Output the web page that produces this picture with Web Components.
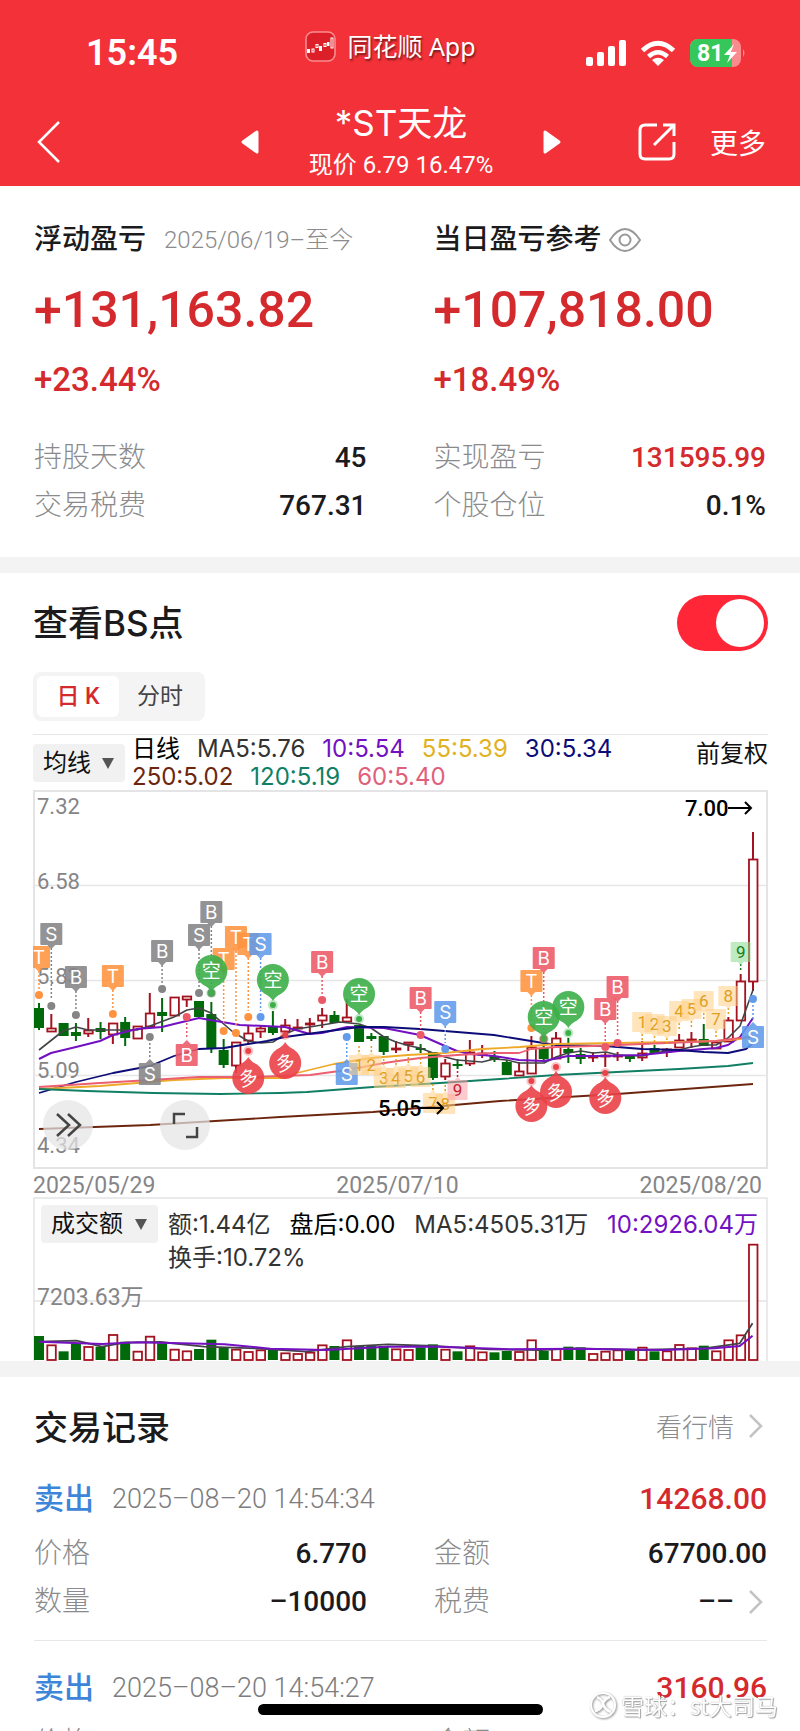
<!DOCTYPE html>
<html lang="zh-CN">
<head>
<meta charset="utf-8">
<meta name="viewport" content="width=device-width, initial-scale=1">
<title>*ST天龙</title>
<style>
body{margin:0;background:#fff;color:#1b1b1d;
 --num:Roboto,"Noto Sans CJK SC",sans-serif;
 --ui:Inter,"Noto Sans CJK SC",sans-serif;
 --red:#d42a2e;--muted:#8b8b8d;--line:#e7e7e9;
 font:400 28px/48px var(--num)}
</style>
</head>
<body>
<trade-page></trade-page>
<script>
const define=(name,html,init)=>{
  const t=document.createElement('template');t.innerHTML=html;
  customElements.define(name,class extends HTMLElement{
    constructor(){super();this.attachShadow({mode:'open'}).append(t.content.cloneNode(true));}
    connectedCallback(){if(init&&!this.ready){this.ready=true;init.call(this,this.shadowRoot);}}
  });
};

define('status-bar',`<style>
:host{display:grid;grid-template-columns:1fr auto 1fr;align-items:center;height:98px;padding:8px 53px 0 86px;color:#fff;box-sizing:border-box}
time{font:600 36px/40px var(--num)}
.app{display:flex;align-items:center;gap:11px;font:400 25px/36px "Noto Sans","Noto Sans CJK SC",sans-serif;text-shadow:1px 2px 2px #0008;padding:0 0 14px;margin-right:52px}
.sys{display:flex;justify-content:flex-end;align-items:center;gap:14px}
svg{display:block}
</style>
<time>15:45</time>
<div class="app"><svg width="31" height="31" viewBox="0 0 31 31"><rect x="1" y="1" width="29" height="29" rx="7" fill="#dc1f28" stroke="#f98d8f" stroke-width="1.6"/><g fill="#fff"><rect x="2" y="18" width="3" height="4"/><rect x="14" y="15" width="3" height="5"/><rect x="22" y="11" width="2.500" height="4"/></g><g fill="none" stroke="#fff" stroke-width="1"><rect x="7" y="18" width="2" height="3"/><rect x="11" y="13.500" width="2" height="3"/><rect x="19" y="12.500" width="2" height="3"/><rect x="26" y="7" width="2" height="10"/></g></svg><span>同花顺 App</span></div>
<div class="sys">
<svg width="40" height="27" viewBox="0 0 40 27" fill="#fff"><rect y="17" width="7" height="9" rx="2"/><rect x="11" y="12" width="7" height="14" rx="2"/><rect x="22" y="6" width="7" height="20" rx="2"/><rect x="33" width="7" height="26" rx="2"/></svg>
<svg width="36" height="27" viewBox="0 0 36 27"><g fill="none" stroke="#fff" stroke-width="5"><path d="M2.500 10.500Q18-4 33.500 10.500"/><path d="M8.500 16.500Q18 8 27.500 16.500" stroke-width="4.500"/></g><path d="M18 26l-6-6q6-4.500 12 0z" fill="#fff"/></svg>
<svg width="57" height="28" viewBox="0 0 57 28"><defs><clipPath id="b"><rect width="51" height="28" rx="8"/></clipPath></defs><g clip-path="url(#b)"><rect width="51" height="28" fill="#f98a8d"/><rect width="42" height="28" fill="#35c759"/></g><path d="M53 10q3 4 0 8z" fill="#f98a8d"/><text x="7" y="22" font-family="Roboto" font-weight="700" font-size="23" fill="#fff">81</text><path d="M44 5L34 16h6l-3 8 10-11h-6z" fill="#fff"/></svg>
</div>`);

define('stock-header',`<style>
:host{display:grid;grid-template-columns:1fr auto 1fr;align-items:center;height:88px;padding:0 34px 0 36px;color:#fff;box-sizing:border-box}
button{appearance:none;border:0;background:none;color:inherit;padding:0;font:400 28px/40px "Noto Sans CJK SC",sans-serif;display:block}
svg{display:block}
.mid{display:flex;align-items:center;gap:42px}
.name{width:200px;text-align:center}
h1{margin:4px 0 0;font:400 35px/42px Inter,"Noto Sans CJK SC",sans-serif}
p{margin:0;font:400 24px/42px var(--num);white-space:nowrap}
.right{display:flex;justify-content:flex-end;align-items:center;gap:34px}
</style>
<button aria-label="返回"><svg width="26" height="42" viewBox="0 0 26 42"><path d="M23 1L3 21l20 20" fill="none" stroke="#fff" stroke-width="2.500"/></svg></button>
<div class="mid"><button aria-label="上一只"><svg width="18" height="24" viewBox="0 0 18 24"><path d="M16 2v20L2 12z" fill="#fff" stroke="#fff" stroke-width="3" stroke-linejoin="round"/></svg></button>
<div class="name"><h1>*ST天龙</h1><p>现价 6.79 16.47%</p></div>
<button aria-label="下一只"><svg width="18" height="24" viewBox="0 0 18 24"><path d="M2 2v20l14-10z" fill="#fff" stroke="#fff" stroke-width="3" stroke-linejoin="round"/></svg></button></div>
<div class="right"><button aria-label="分享"><svg width="38" height="38" viewBox="0 0 38 38" fill="none" stroke="#fff" stroke-width="3"><path d="M19 2H7Q2 2 2 7v24q0 5 5 5h24q5 0 5-5V19M25 2h11v11M36 2L16 22"/></svg></button><button>更多</button></div>`);

define('data-row',`<style>
:host{display:flex;justify-content:space-between;align-items:center;height:48px;font:400 28px/48px var(--num)}
.k{color:var(--muted);font-weight:300}.v{font-weight:500;display:flex;align-items:center;gap:14px}
:host([red]) .v{color:var(--red)}
</style><span class="k"></span><span class="v"><span class="t"></span><slot></slot></span>`,function(r){
 r.querySelector('.k').textContent=this.getAttribute('label');
 r.querySelector('.t').textContent=this.getAttribute('value');});

define('go-chevron',`<style>:host{display:block}svg{display:block}</style><svg width="15" height="26" viewBox="0 0 15 26"><path d="M2 2l11 11L2 24" fill="none" stroke="#c3c3c6" stroke-width="2.500"/></svg>`);

define('profit-card',`<style>
:host{display:block;min-width:0}
header{display:flex;align-items:center;height:40px;white-space:nowrap}
h2{margin:0;font:500 28px/40px var(--num)}
.big{color:var(--red);font:500 50px/100px var(--num)}
.pct{color:var(--red);font:500 33px/40px var(--num);margin-bottom:34px}
</style><header><h2></h2><slot name="extra"></slot></header><div class="big"></div><div class="pct"></div><slot></slot>`,function(r){
 r.querySelector('h2').textContent=this.getAttribute('heading');
 r.querySelector('.big').textContent=this.getAttribute('amount');
 r.querySelector('.pct').textContent=this.getAttribute('percent');});

define('drop-down',`<style>
:host{display:block;position:relative;height:38px}
select{appearance:none;border:0;border-radius:4px;background:#f1f1f2;height:38px;width:100%;padding:0 30px 0 10px;font:400 24px/38px var(--num);color:#111;display:block}
svg{position:absolute;right:11px;top:13px;pointer-events:none}
</style><select><option></option></select><svg width="12" height="13" viewBox="0 0 12 13"><path d="M0 1h12L6 12z" fill="#555"/></svg>`,function(r){
 r.querySelector('option').textContent=this.getAttribute('value');
 r.querySelector('select').setAttribute('aria-label',this.getAttribute('value'));});

const X=i=>39+12.31*i;
const poly=(pts,c,w=1.8)=>`<polyline points="${pts}" fill="none" stroke="${c}" stroke-width="${w}" stroke-linejoin="round"/>`;
const R='#a3121f',G='#006a0b';

define('k-chart',`<style>
:host{display:block;position:relative}
svg{display:block;width:100%;height:auto}
button{position:absolute;width:50px;height:50px;border:0;border-radius:25px;padding:0;background:#e4e4e6b8;bottom:19px}
.a{left:10px}.b{left:127px}
</style><svg id="c" viewBox="33 790 735 379"></svg>
<button class="a" aria-label="展开"><svg viewBox="0 0 50 50" fill="none" stroke="#444" stroke-width="2.500"><path d="M14 14l12 11-12 11M25 14l12 11-12 11"/></svg></button>
<button class="b" aria-label="全屏"><svg viewBox="0 0 50 50" fill="none" stroke="#444" stroke-width="2.500"><path d="M14 24V14h11M37 27v10H26"/></svg></button>`,function(r){
 // colour, body top, body bottom, wick top, wick bottom
 const K=[
 'g',1008,1028,1003,1030,'r',1028,1032,1014,1032,'g',1023,1036,1023,1036,'g',1032,1036,1023,1041,'r',1030,1034,1018,1037,'g',1028,1032,1022,1039,
 'r',1023,1035,1023,1044,'g',1022,1038,1017,1046,'r',1026,1039,1026,1039,'r',1013,1027,993,1027,'g',1012,1016,998,1032,'r',997,1016,997,1016,
 'r',996,1000,996,1007,'g',1001,1017,1001,1017,'g',1014,1049,1002,1053,'g',1050,1065,1039,1068,'r',1042,1066,1042,1073,'r',1033,1041,1025,1045,
 'r',1028,1032,1025,1038,'g',1027,1033,1011,1035,'r',1025,1032,1019,1033,'r',1027,1029,1019,1029,'r',1023,1025,1018,1034,'r',1015,1021,1008,1028,
 'g',1015,1023,1011,1023,'r',1017,1022,999,1023,'g',1025,1042,1025,1042,'g',1036,1039,1033,1041,'g',1036,1052,1036,1055,'r',1048,1050,1041,1053,
 'r',1042,1045,1042,1051,'g',1048,1050,1044,1053,'g',1052,1078,1052,1080,'r',1063,1077,1059,1080,'g',1064,1066,1059,1069,'r',1052,1064,1040,1066,
 'r',1053,1055,1045,1058,'g',1056,1060,1051,1062,'g',1062,1075,1060,1075,'r',1071,1076,1062,1076,'r',1047,1074,1036,1074,'g',1048,1059,1042,1061,
 'r',1038,1059,1032,1059,'g',1049,1053,1038,1063,'g',1054,1059,1048,1064,'r',1056,1057,1052,1062,'r',1055,1056,1053,1067,'r',1055,1057,1052,1061,
 'g',1055,1059,1055,1062,'r',1053,1058,1041,1061,'g',1048,1054,1045,1054,'r',1049,1052,1048,1057,'r',1040,1048,1034,1048,'r',1039,1041,1032,1048,
 'g',1039,1046,1024,1046,'r',1042,1049,1042,1049,'r',1020,1042,1017,1042,'r',981,1021,974,1021,'r',859,982,832,991];
 let s='<rect x="34" y="791" width="733" height="377" fill="#fff" stroke="#e4e4e6" stroke-width="2"/>';
 for(const y of [885,980,1075])s+=`<path d="M34 ${y}.500H767" stroke="#e6e6e8" stroke-width="1.500"/>`;
 for(const [t,y] of [['7.32',814],['6.58',889],['5.83',984],['5.09',1078],['4.34',1153]])s+=`<text x="37" y="${y}" font-size="22" fill="#858587">${t}</text>`;
 for(let i=0;i<59;i++){
  const [c,a,b,h,l]=K.slice(i*5,i*5+5),x=X(i),col=c==='g'?G:R;
  if(h<a)s+=`<path d="M${x} ${h}V${a}" stroke="${col}" stroke-width="2"/>`;
  if(l>b)s+=`<path d="M${x} ${b}V${l}" stroke="${col}" stroke-width="2"/>`;
  s+=c==='g'?`<rect x="${x-5}" y="${a}" width="10" height="${b-a}" fill="${G}"/>`
   :`<rect x="${x-4}" y="${a+.5}" width="8.500" height="${Math.max(1,b-a-1)}" fill="#fff" stroke="${R}" stroke-width="1.800"/>`;
 }
 s+=poly('39,1050 63,1031 76,1027 88,1030 107,1030 137,1030 150,1026 174,1017 187,1010 199,1008 211,1013 233,1032 248,1041 261,1043 273,1042 285,1034 297,1029 322,1025 340,1022 359,1024 371,1028 384,1037 396,1042 410,1046 420,1048 433,1053 445,1057 457,1060 470,1061 482,1062 494,1059 507,1060 519,1063 544,1063 556,1057 568,1053 581,1051 593,1053 606,1052 618,1055 642,1056 654,1053 667,1051 679,1050 691,1047 703,1045 716,1045 728,1038 740,1026 753,990','#444448',1.6)
 +poly('39,1059 51,1053 76,1047 100,1041 113,1035 137,1029 162,1027 174,1024 199,1018 216,1021 240,1025 285,1027 310,1034 322,1033 347,1027 384,1028 420,1035 445,1046 457,1051 470,1054 494,1056 519,1060 544,1061 568,1056 605,1056 642,1055 679,1051 716,1048 728,1045 740,1037 753,1018','#7210c2',2)
 +poly('39,1093 76,1082 113,1073 150,1066 174,1056 199,1049 224,1048 248,1044 267,1041 285,1037 322,1032 359,1027 384,1027 420,1029 457,1032 494,1035 531,1041 556,1045 605,1046 642,1049 679,1050 704,1052 728,1053 746,1049 753,1043','#0c0c78')
 +poly('39,1089 100,1086 137,1083 174,1080 224,1078 285,1078 297,1073 334,1064 371,1058 408,1055 445,1053 482,1049 520,1047 556,1044 617,1043 679,1042 716,1041 740,1039 753,1037','#efa928')
 +poly('39,1087 100,1083 150,1080 199,1077 248,1077 280,1076 310,1075 347,1070 384,1063 420,1058 457,1055 494,1053 519,1053 531,1049 556,1047 593,1046 642,1044 667,1043 716,1041 740,1038 753,1036','#eb5f70')
 +poly('39,1089 87,1091 153,1093 220,1094 280,1093 307,1092 373,1087 440,1083 500,1079 556,1075 617,1072 679,1069 728,1066 753,1063','#117f64')
 +poly('39,1129 150,1125 280,1117 373,1112 500,1101 617,1094 753,1084','#6d260e');
 const C={g:'#858587',o:'#ff9340',b:'#619bea',r:'#ec5967'};
 // lettered flag: index, letter, colour, box top, dot centre, flag below its dot
 const flag=(i,t,k,top,dot,up)=>{const x=X(i),c=C[k];
  s+=`<path d="M${x} ${up?dot+6:top+25}V${up?top-5:dot-6}" stroke="${c}" stroke-width="1.500" stroke-dasharray="2 2"/><circle cx="${x}" cy="${dot}" r="4" fill="${c}"/><g opacity=".88"><path d="${up?`M${x-4} ${top}l4-4 4 4z`:`M${x-4} ${top+22}l4 4 4-4z`}" fill="${c}"/><rect x="${x-11}" y="${top}" width="22" height="22" rx="1" fill="${c}"/></g><text x="${x}" y="${top+18}" font-family="Inter" font-size="19" text-anchor="middle" fill="#fff">${t}</text>`;};
 [[0,'T','o',946,995],[1,'S','g',923,1006],[3,'B','g',966,1015],[6,'T','o',965,1014],[9,'S','g',1063,1037,1],[10,'B','g',940,989],[12,'B','r',1044,1017,1],
 [13,'S','g',924,993],[14,'B','g',901,993],[15,'T','o',948,1031],[16,'T','o',926,1033],[17,'T','o',933,1017],[18,'S','b',933,1017],[23,'B','r',951,1000],
 [25,'S','b',1063,1037,1],[31,'B','r',987,1035],[33,'S','b',1001,1049],[40,'T','o',970,1028],[41,'B','r',947,1039],[46,'B','r',998,1047],[47,'B','r',976,1043],[58,'S','b',1026,999,1]].forEach(a=>flag(...a));
 // round pins: green sits over its dot, red sits under it
 const pin=(i,cy,dot,up)=>{const x=X(i),c=up?'#ea4249':'#3caf49';
  s+=`<circle cx="${x}" cy="${dot}" r="5" fill="${c}" opacity=".3"/><circle cx="${x}" cy="${dot}" r="3" fill="${c}"/><g opacity=".9"><path d="${up?`M${x-9} ${cy-13}Q${x-2} ${cy-17} ${x} ${cy-21}Q${x+2} ${cy-17} ${x+9} ${cy-13}z`:`M${x-9} ${cy+13}Q${x-2} ${cy+17} ${x} ${cy+21}Q${x+2} ${cy+17} ${x+9} ${cy+13}z`}" fill="${c}"/><circle cx="${x}" cy="${cy}" r="16" fill="${c}"/></g><text x="${x}" y="${cy+7}" font-size="19" text-anchor="middle" fill="#fff"${up?` transform="rotate(-14 ${x} ${cy})"`:''}>${up?'多':'空'}</text>`;};
 [[14,971,993],[19,980,1005],[26,994,1019],[41,1017,1039],[43,1007,1033],[17,1078,1051,1],[20,1063,1035,1],[40,1106,1081,1],[42,1092,1067,1],[46,1098,1073,1]].forEach(a=>pin(...a));
 // nine-count labels
 const num=(i,t,top,up,k='o')=>{const x=X(i),[f,c]={o:['#ffcf87','#e0a021'],r:['#fb9da5','#c4222b'],g:['#8cdc92','#12801c']}[k];
  s+=`<path d="M${x} ${up?top-3:top+22}v${up?-8:8}" stroke="${c}" stroke-width="1.500" stroke-dasharray="2 2"/><g fill="${f}" opacity=".55"><rect x="${x-10}" y="${top}" width="20" height="20" rx="1"/><path d="${up?`M${x-3} ${top}l3-3 3 3z`:`M${x-3} ${top+20}l3 3 3-3z`}"/></g><text x="${x}" y="${top+16}" font-size="17" text-anchor="middle" fill="${c}">${t}</text>`;};
 [[26,1,1055,1],[27,2,1055,1],[28,3,1068,1],[29,4,1068,1],[30,5,1066,1],[31,6,1067,1],[32,7,1093,1],[33,8,1094,1],[34,9,1080,1,'r'],
 [49,1,1012],[50,2,1014],[51,3,1016],[52,4,1001],[53,5,999],[54,6,991],[55,7,1009],[56,8,986],[57,9,942,0,'g']].forEach(a=>num(...a));
 s+=`<g font-size="22" font-weight="500" fill="#000"><text x="378" y="1116">5.05</text><text x="685" y="816">7.00</text></g><path d="M420 1108h23m-6-6l6 6-6 6M728 808h23m-6-6l6 6-6 6" fill="none" stroke="#000" stroke-width="2"/>`;
 r.getElementById('c').innerHTML=s;});

define('volume-chart',`<style>
:host{display:block;position:relative}
#c{display:block;width:100%;height:auto}
.legend{position:absolute;inset:8px 10px auto 8px;display:grid;grid-template-columns:117px 1fr;column-gap:10px;font:400 24px/33px var(--ui);color:#333}
.text{padding-top:3px}
.row{display:flex;justify-content:space-between;white-space:nowrap}
.k{color:#000}.p{color:#7210c2}
</style><svg id="c" viewBox="33 1197 735 164"></svg>
<div class="legend"><drop-down value="成交额"></drop-down><div class="text"><div class="row"><span>额:1.44亿</span><span class="k">盘后:0.00</span><span>MA5:4505.31万</span><span class="p">10:2926.04万</span></div><div>换手:10.72%</div></div></div>`,function(r){
 const V='g528 r553 g574 g550 r558 g560 r522 g545 r572 r527 g550 r566 r571 g567 g539 g563 r566 r573 r568 g570 r577 r579 r575 r553 g558 r538 g558 g558 g558 r565 r567 g562 g553 r566 g574 r556 r574 g577 g573 r573 r538 g573 r564 g560 g562 r579 r572 r568 g572 r560 g574 r571 r552 r562 g557 r571 r538 r523 r251'.split(' ');
 const Y=v=>1160+v/3;
 let s='<path d="M34 1361V1198H767V1361M34 1301H767" fill="none" stroke="#e4e4e6" stroke-width="1.500"/><text x="37" y="1305" font-size="23" fill="#858587">7203.63万</text>';
 V.forEach((v,i)=>{const x=X(i),y=Y(+v.slice(1));
  s+=v[0]==='g'?`<rect x="${x-5}" y="${y}" width="10" height="${1360-y}" fill="${G}"/>`:`<rect x="${x-4}" y="${y+1}" width="8.500" height="${1359-y}" fill="#fff" stroke="${R}" stroke-width="1.800"/>`;});
 const L=a=>a.map(([x,y])=>(x/1.96)+','+Y(y)).join(' ');
 s+=poly(L([[76,545],[150,542],[200,560],[245,548],[315,546],[400,560],[500,565],[600,575],[680,560],[760,553],[850,558],[960,568],[1060,570],[1130,565],[1250,570],[1380,565],[1450,550],[1475,490]]),'#444448')
  +poly(L([[76,545],[200,552],[270,547],[440,553],[530,566],[640,570],[760,560],[860,560],[1000,568],[1130,566],[1300,570],[1400,565],[1450,558],[1475,527]]),'#7210c2',2);
 r.getElementById('c').innerHTML=s;});

define('bs-panel',`<style>
:host{display:block;padding:0 32px 0 33px}
.top{display:flex;justify-content:space-between;align-items:center;height:99px}
label{font:500 35px/48px Inter,"Noto Sans CJK SC",sans-serif}
h2{margin:0;font:inherit}
input{appearance:none;margin:0;width:91px;height:56px;border-radius:28px;background:#ff2638;padding:4px;display:flex;justify-content:flex-end;box-sizing:border-box}
input::before{content:"";width:48px;height:48px;border-radius:24px;background:#fff}
.seg{display:inline-flex;background:#f4f4f5;border-radius:8px;padding:4px;height:49px;box-sizing:border-box;vertical-align:top}
.seg button{appearance:none;border:0;background:none;width:82px;border-radius:6px;font:400 23px/40px var(--num);color:#444;padding:0;white-space:nowrap}
.seg .on{background:#fff;color:var(--red);font-weight:500}
.info{margin-top:13px;border-top:1px solid var(--line);display:grid;grid-template-columns:92px 1fr auto;column-gap:7px;height:56px;box-sizing:border-box}
drop-down{margin-top:9px}
.ma{font:400 24px/28px var(--ui);color:#333}
.ma div{display:flex;gap:17px;white-space:nowrap}
.adj{font:400 24px/38px var(--num);color:#111}
.dates{display:flex;justify-content:space-between;font:400 23px/24px var(--num);color:#858587;padding:5px 6px 0 0;height:28px;box-sizing:border-box}
</style>
<div class="top"><label for="bs"><h2>查看BS点</h2></label><input id="bs" type="checkbox" role="switch" checked></div>
<div class="seg"><button class="on">日 K</button><button>分时</button></div>
<div class="info"><drop-down value="均线"></drop-down>
<div class="ma"><div><span style="color:#000">日线</span><span>MA5:5.76</span><span style="color:#7210c2">10:5.54</span><span style="color:#e2b21e">55:5.39</span><span style="color:#0c0c78">30:5.34</span></div>
<div><span style="color:#6d260e">250:5.02</span><span style="color:#117f64">120:5.19</span><span style="color:#e0607c">60:5.40</span></div></div>
<span class="adj">前复权</span></div>
<k-chart></k-chart>
<div class="dates"><span>2025/05/29</span><span>2025/07/10</span><span>2025/08/20</span></div>
<volume-chart></volume-chart>`);

define('trade-record',`<style>
:host{display:block;padding-bottom:14px;border-bottom:1px solid var(--line);margin-bottom:26px}
header{display:flex;align-items:center;height:42px;white-space:nowrap;gap:18px}
b{font:500 30px/42px var(--num);color:#3d85d8}
time{font:300 27px/42px var(--num);color:#7d7d80}
strong{margin-left:auto;font:500 30px/42px var(--num);color:var(--red)}
.grid{display:grid;grid-template-columns:1fr 1fr;column-gap:67px;margin-top:10px}
</style><header><b>卖出</b><time></time><strong></strong></header><div class="grid"><slot></slot></div>`,function(r){
 r.querySelector('time').textContent=this.getAttribute('time');
 r.querySelector('strong').textContent=this.getAttribute('profit');});

define('trade-list',`<style>
:host{display:block;padding:0 33px 0 34px}
.top{display:flex;justify-content:space-between;align-items:center;height:101px;padding-bottom:4px;box-sizing:border-box}
h2{margin:0;font:500 34px/48px "Noto Sans CJK SC",sans-serif}
a{display:flex;align-items:center;gap:14px;color:var(--muted);text-decoration:none;font:300 26px/40px "Noto Sans CJK SC",sans-serif;padding-right:4px}
.pad{padding-right:4px}
</style><div class="top"><h2>交易记录</h2><a href="#">看行情<go-chevron></go-chevron></a></div>
<trade-record time="2025–08–20 14:54:34" profit="14268.00"><data-row label="价格" value="6.770"></data-row><data-row label="金额" value="67700.00"></data-row><data-row label="数量" value="–10000"></data-row><data-row label="税费" value="––"><go-chevron class="pad"></go-chevron></data-row></trade-record>
<trade-record time="2025–08–20 14:54:27" profit="3160.96"><data-row label="价格" value="6.790"></data-row><data-row label="金额" value="14966.00"></data-row></trade-record>`);

define('water-mark',`<style>
:host{position:fixed;right:22px;bottom:10px;display:flex;align-items:center;gap:4px;font:400 23px/32px "Noto Sans CJK SC",sans-serif;color:#fff;text-shadow:1px 1px 1px #777a,0 0 1px #999}
svg{filter:drop-shadow(1px 1px 1px #888)}
</style><svg width="28" height="28" viewBox="0 0 28 28" fill="none" stroke="#fff" stroke-width="2"><circle cx="14" cy="14" r="12"/><path d="M8 6q8 4 5 9-2 4-7 5M21 6q-6 2-7 7 2 6 8 8" stroke-width="2.500"/></svg><span>雪球：st大司马</span>`);

define('trade-page',`<style>
:host{display:block;height:100vh;overflow:hidden}
.head{background:#f23138}
.profit{display:grid;grid-template-columns:1fr 1fr;column-gap:67px;padding:34px 34px 27px}
.band{height:16px;box-sizing:border-box;background:#f3f3f4}
.since{font:300 24px/40px var(--num);color:var(--muted);margin-left:18px}
.eye{margin-left:6px}
.bar{position:fixed;left:50%;margin-left:-142px;bottom:16px;width:285px;height:11px;border-radius:6px;background:#000}
</style>
<div class="head"><status-bar></status-bar><stock-header></stock-header></div>
<div class="profit">
<profit-card heading="浮动盈亏" amount="+131,163.82" percent="+23.44%"><span slot="extra" class="since">2025/06/19–至今</span><data-row label="持股天数" value="45"></data-row><data-row label="交易税费" value="767.31"></data-row></profit-card>
<profit-card heading="当日盈亏参考" amount="+107,818.00" percent="+18.49%"><svg slot="extra" class="eye" width="34" height="26" viewBox="0 0 34 26" fill="none" stroke="#98989b" stroke-width="2"><path d="M2 13Q9 2 17 2t15 11Q25 24 17 24T2 13z"/><circle cx="17" cy="13" r="5.500"/></svg><data-row red label="实现盈亏" value="131595.99"></data-row><data-row label="个股仓位" value="0.1%"></data-row></profit-card>
</div>
<div class="band"></div>
<bs-panel></bs-panel>
<div class="band"></div>
<trade-list></trade-list>
<div class="bar"></div>
<water-mark></water-mark>`);
</script>
</body>
</html>
